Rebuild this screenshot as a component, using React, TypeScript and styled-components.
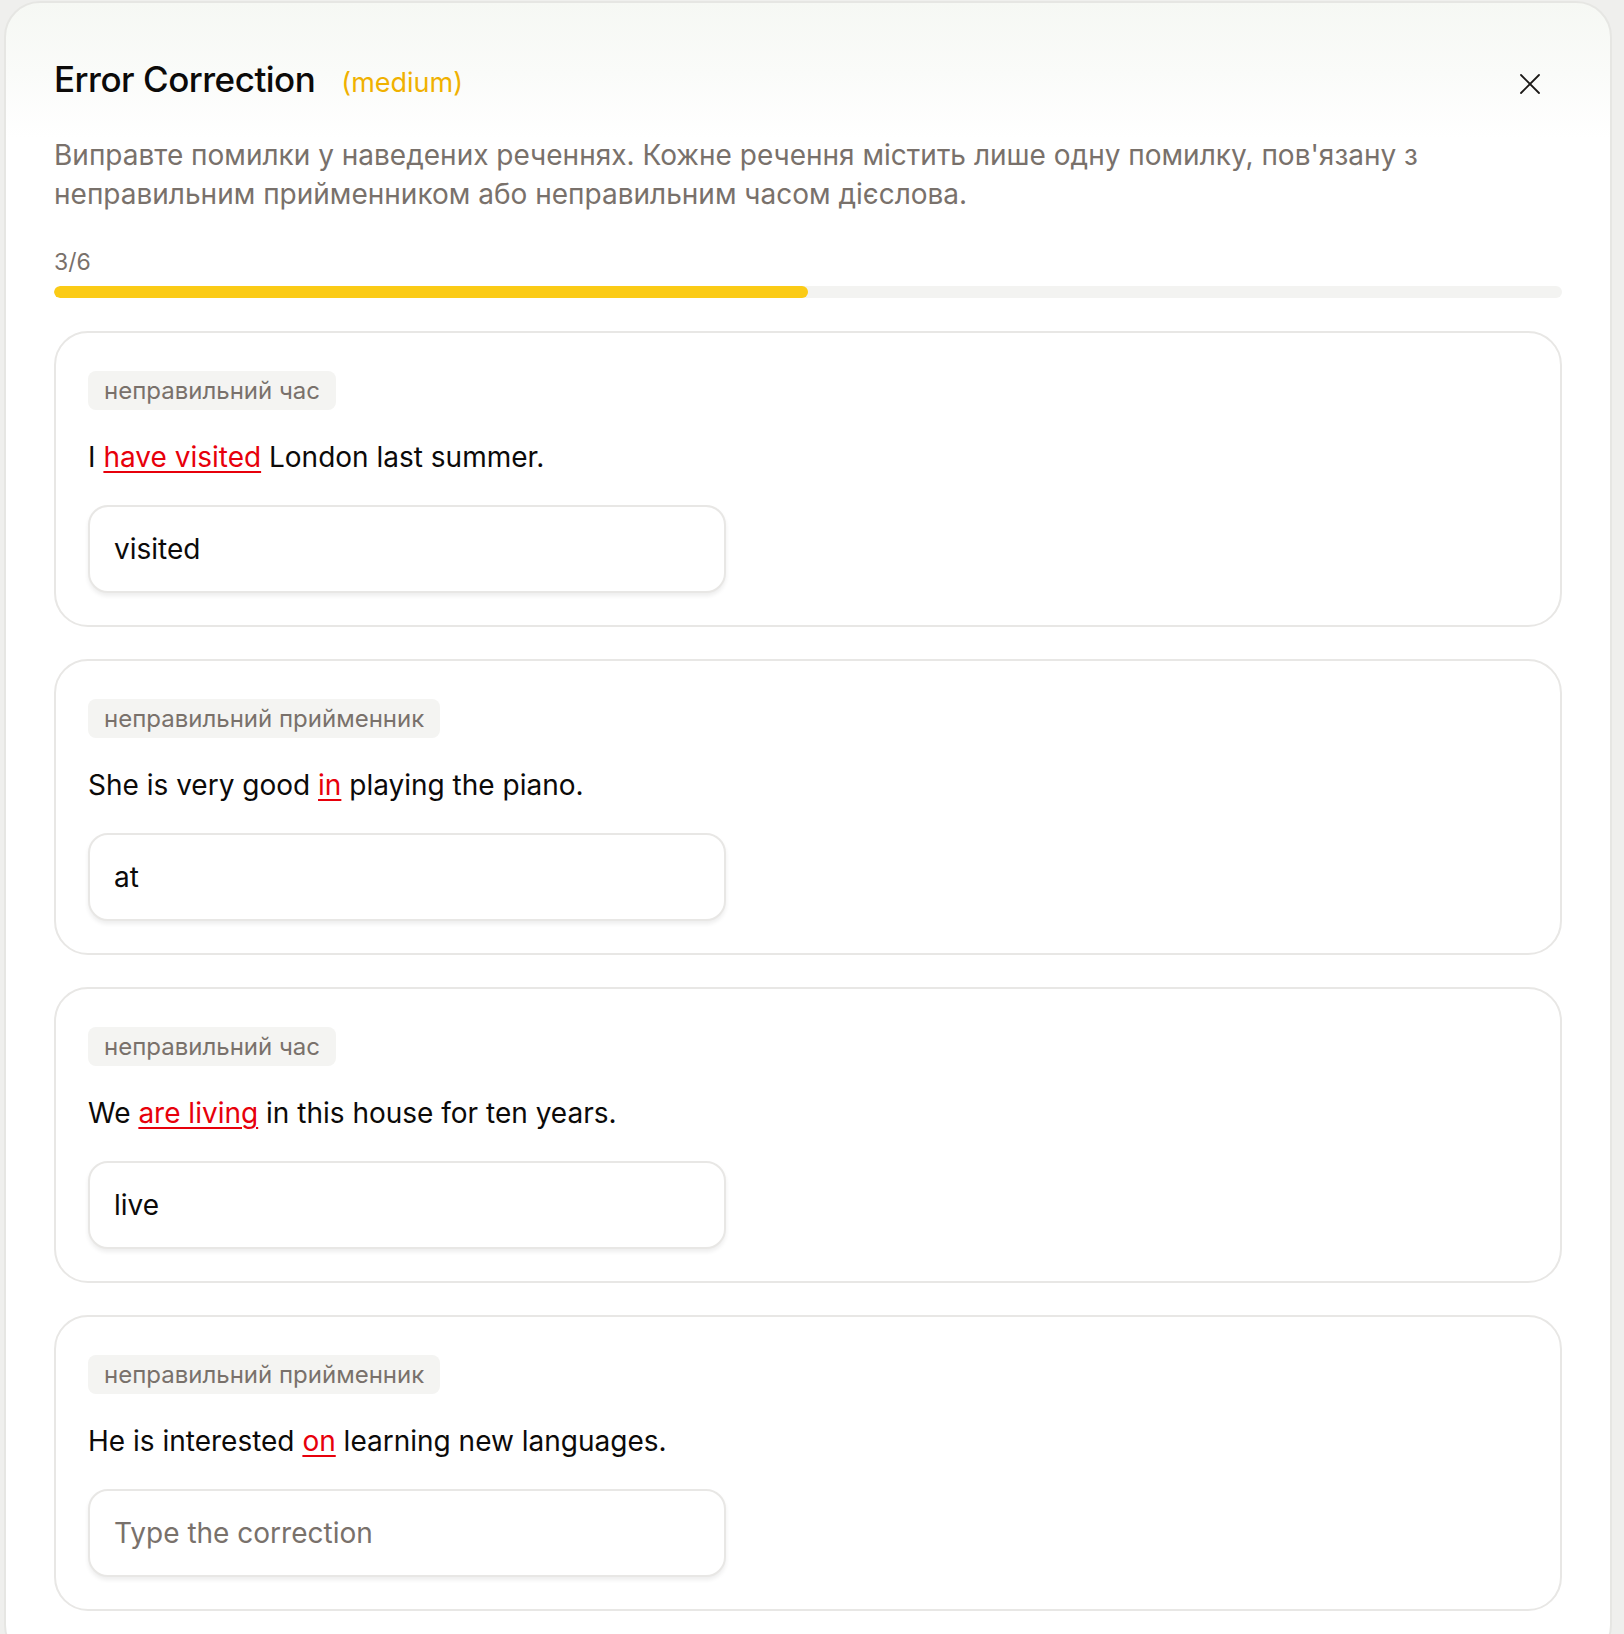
import React from "react";
import styled, { createGlobalStyle } from "styled-components";

type Part = { text: string; wrong?: boolean };

type Item = {
  tag: string;
  parts: Part[];
  answer: string;
};

const items: Item[] = [
  {
    tag: "неправильний час",
    parts: [{ text: "I " }, { text: "have visited", wrong: true }, { text: " London last summer." }],
    answer: "visited",
  },
  {
    tag: "неправильний прийменник",
    parts: [{ text: "She is very good " }, { text: "in", wrong: true }, { text: " playing the piano." }],
    answer: "at",
  },
  {
    tag: "неправильний час",
    parts: [{ text: "We " }, { text: "are living", wrong: true }, { text: " in this house for ten years." }],
    answer: "live",
  },
  {
    tag: "неправильний прийменник",
    parts: [{ text: "He is interested " }, { text: "on", wrong: true }, { text: " learning new languages." }],
    answer: "",
  },
];

const GlobalStyle = createGlobalStyle`
  body {
    margin: 0;
    background: #efefed;
    font-family: Inter, "Noto Sans", sans-serif;
    color: #0c0a09;
  }
`;

const Backdrop = styled.div`
  padding: 1px 12px 0 4px;
`;

const Panel = styled.div`
  background: linear-gradient(180deg, #f6f8f4 0px, #fafbf9 70px, #ffffff 135px);
  border: 2px solid #e6e6e3;
  border-radius: 36px;
  padding: 54px 48px 48px;
`;

const Header = styled.div`
  display: flex;
  align-items: flex-start;
  justify-content: space-between;
`;

const TitleRow = styled.div`
  display: flex;
  align-items: baseline;
  gap: 26px;
`;

const Title = styled.h2`
  margin: 0;
  font-size: 35px;
  line-height: 44px;
  font-weight: 500;
  letter-spacing: -0.5px;
`;

const Level = styled.span`
  font-size: 27px;
  color: #f0b100;
`;

const CloseButton = styled.button`
  border: none;
  background: none;
  padding: 0;
  margin: 15px 20px 0 0;
  width: 24px;
  height: 24px;
  display: flex;
  align-items: center;
  justify-content: center;
  color: #1c1917;
  cursor: pointer;
`;

const Description = styled.p`
  margin: 35px 0 0;
  font-size: 28px;
  line-height: 39px;
  color: #79716b;
  max-width: 1420px;
`;

const Counter = styled.div`
  margin-top: 33px;
  font-size: 23px;
  line-height: 30px;
  color: #79716b;
`;

const Track = styled.div`
  margin-top: 9px;
  height: 12px;
  border-radius: 6px;
  background: #f3f3f1;
  overflow: hidden;
`;

const Fill = styled.div`
  height: 100%;
  border-radius: 6px;
  background: #fbcb16;
`;

const List = styled.div`
  margin-top: 33px;
  display: flex;
  flex-direction: column;
  gap: 32px;
`;

const Card = styled.div`
  border: 2px solid #e8e7e5;
  border-radius: 34px;
  padding: 38px 32px 32px;
  background: #fff;
`;

const Tag = styled.span`
  display: inline-block;
  background: #f4f4f2;
  color: #79716b;
  border-radius: 8px;
  padding: 0 16px;
  font-size: 24px;
  line-height: 39px;
`;

const Sentence = styled.p`
  margin: 27px 0 0;
  font-size: 28px;
  line-height: 40px;
`;

const Wrong = styled.span`
  color: #e7000b;
  text-decoration: underline;
  text-decoration-thickness: 2px;
  text-underline-offset: 4px;
`;

const AnswerInput = styled.input`
  display: block;
  box-sizing: border-box;
  margin-top: 28px;
  width: 638px;
  height: 88px;
  border: 2px solid #e8e7e5;
  border-radius: 20px;
  padding: 0 24px;
  font-family: Inter, "Noto Sans", sans-serif;
  font-size: 28px;
  color: #0c0a09;
  background: #fff;
  box-shadow: 0 3px 4px rgba(0, 0, 0, 0.07);
  outline: none;

  &::placeholder {
    color: #79716b;
  }
`;

function CloseIcon() {
  return (
    <svg width="22" height="22" viewBox="0 0 22 22" fill="none" stroke="currentColor" strokeWidth="1.8" strokeLinecap="round">
      <path d="M2 2L20 20" />
      <path d="M20 2L2 20" />
    </svg>
  );
}

export default function App() {
  const [answers, setAnswers] = React.useState(items.map((i) => i.answer));
  const done = 3;
  const total = 6;

  return (
    <>
      <GlobalStyle />
      <Backdrop>
        <Panel>
          <Header>
            <TitleRow>
              <Title>Error Correction</Title>
              <Level>(medium)</Level>
            </TitleRow>
            <CloseButton aria-label="Close">
              <CloseIcon />
            </CloseButton>
          </Header>
          <Description>
            Виправте помилки у наведених реченнях. Кожне речення містить лише одну помилку, пов'язану з
            неправильним прийменником або неправильним часом дієслова.
          </Description>
          <Counter>
            {done}/{total}
          </Counter>
          <Track>
            <Fill style={{ width: `${(done / total) * 100}%` }} />
          </Track>
          <List>
            {items.map((item, idx) => (
              <Card key={idx}>
                <Tag>{item.tag}</Tag>
                <Sentence>
                  {item.parts.map((p, j) => (p.wrong ? <Wrong key={j}>{p.text}</Wrong> : <span key={j}>{p.text}</span>))}
                </Sentence>
                <AnswerInput
                  value={answers[idx]}
                  placeholder="Type the correction"
                  onChange={(e) => {
                    const next = [...answers];
                    next[idx] = e.target.value;
                    setAnswers(next);
                  }}
                />
              </Card>
            ))}
          </List>
        </Panel>
      </Backdrop>
    </>
  );
}
